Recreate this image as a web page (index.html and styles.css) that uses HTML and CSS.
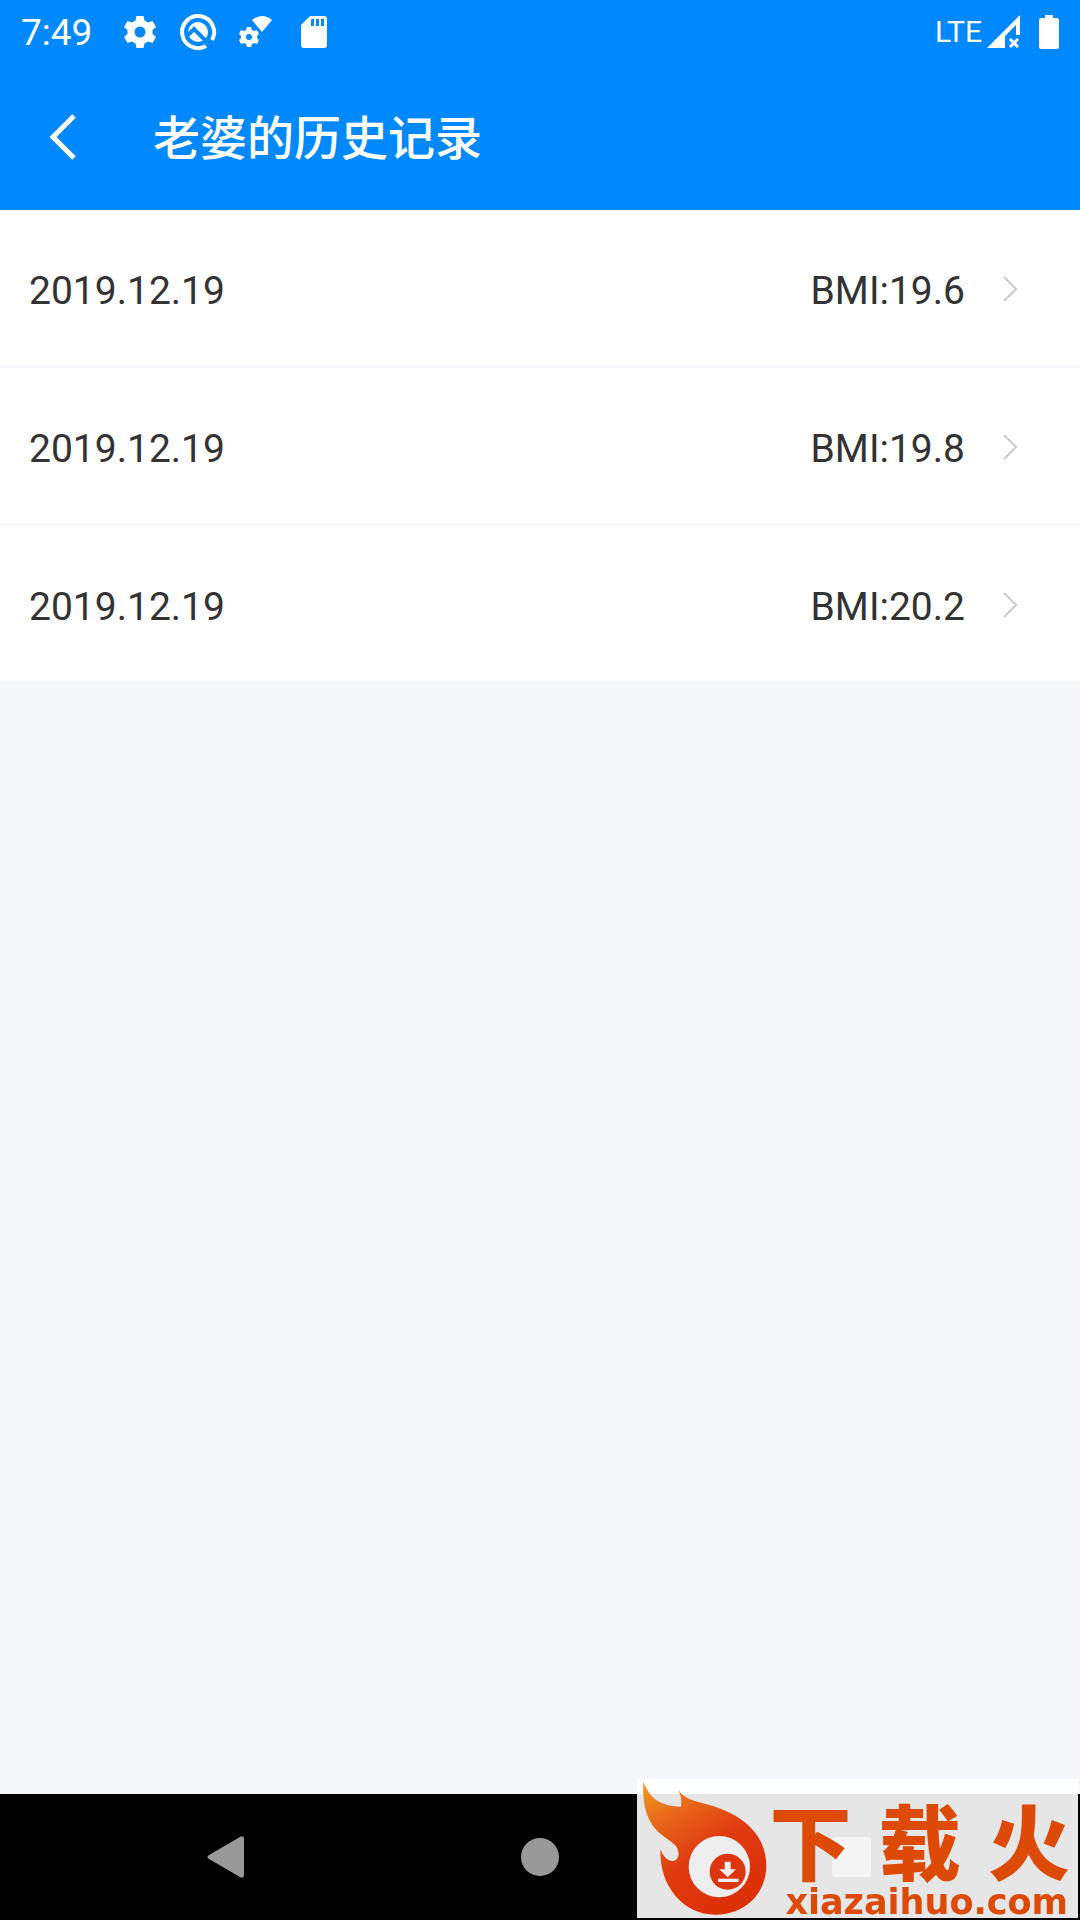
FILE: index.html
```
<!DOCTYPE html>
<html lang="zh-CN">
    <head>
        <meta charset="utf-8">
        <meta name="viewport" content="width=device-width, initial-scale=1">
        <link rel="stylesheet" href="styles.css">
        <title>老婆的历史记录</title>
    </head>
    <body>
        <header class="top">
            <div class="status">
                <span class="time">7:49</span>
                <svg class="status-icon" viewBox="0 0 36 36">
                    <path fill-rule="evenodd" d="M14.500 2h7l1 4.500 3.500 2 4.500-1.500 3.500 6-3.500 3v4l3.500 3-3.500 6-4.500-1.500-3.500 2-1 4.500h-7l-1-4.500-3.500-2-4.500 1.500-3.500-6 3.500-3v-4l-3.500-3 3.500-6 4.500 1.500 3.500-2zM18 12.500a5.500 5.500 0 1 0 0 11a5.500 5.500 0 1 0 0-11z"/>
                </svg>
                <svg class="status-icon" viewBox="0 0 36 36">
                    <path class="ring" d="M26 32A16 16 0 1 1 32 26"/>
                    <circle cx="18" cy="18" r="10"/>
                    <path class="slash" d="M7 22l7-7L31 32"/>
                </svg>
                <svg class="status-icon" viewBox="0 0 36 36">
                    <path fill-rule="evenodd" d="M9 13h4l1 3 2 1 3-1 2 4-2 2v2l2 2-2 4-3-1-2 1-1 3H9l-1-3-2-1-3 1-2-4 2-2v-2l-2-2 2-4 3 1 2-1zM11 20a3 3 0 1 0 0 6a3 3 0 1 0 0-6z"/>
                    <path d="M14 6q10-8 20 0L24 18z"/>
                </svg>
                <svg class="status-icon" viewBox="0 0 36 36">
                    <path fill-rule="evenodd" d="M14 2h14q3 0 3 3v26q0 3-3 3H8q-3 0-3-3V11zM15 5v7h3V5zM20 5v7h3V5zM25 5v7h3V5z"/>
                </svg>
                <span class="network">LTE</span>
                <svg class="signal" viewBox="0 0 34 34">
                    <path d="M0 33L33 0v20h-4V10L18 21v12z"/>
                    <path class="cross" d="M23 24l8 8M31 24l-8 8"/>
                </svg>
                <svg class="battery" viewBox="0 0 20 34">
                    <path d="M6 0h8v3h4q2 0 2 2v27q0 2-2 2H2q-2 0-2-2V5q0-2 2-2h4z"/>
                </svg>
            </div>
            <div class="title-bar">
                <button type="button" class="back" aria-label="返回">
                    <svg viewBox="0 0 28 48"><path d="M25 3L4 24l21 21"/></svg>
                </button>
                <h1>老婆的历史记录</h1>
            </div>
        </header>

        <main>
            <ul class="records">
                <li>
                    <a href="#" class="record">
                        <span class="date">2019.12.19</span>
                        <span>BMI:19.6</span>
                        <svg class="arrow" viewBox="0 0 15 26"><path d="M1 1l12 12L1 25"/></svg>
                    </a>
                </li>
                <li>
                    <a href="#" class="record">
                        <span class="date">2019.12.19</span>
                        <span>BMI:19.8</span>
                        <svg class="arrow" viewBox="0 0 15 26"><path d="M1 1l12 12L1 25"/></svg>
                    </a>
                </li>
                <li>
                    <a href="#" class="record">
                        <span class="date">2019.12.19</span>
                        <span>BMI:20.2</span>
                        <svg class="arrow" viewBox="0 0 15 26"><path d="M1 1l12 12L1 25"/></svg>
                    </a>
                </li>
            </ul>
        </main>

        <nav class="system-nav">
            <button type="button" aria-label="Back">
                <svg viewBox="0 0 42 42"><path d="M3 19L34 1q4-2 4 2v36q0 4-4 2L3 23q-3-2 0-4z"/></svg>
            </button>
            <button type="button" aria-label="Home">
                <svg viewBox="0 0 42 42"><circle cx="21" cy="21" r="19"/></svg>
            </button>
            <button type="button" aria-label="Recent apps">
                <svg viewBox="0 0 42 42"><rect x="0" y="1" width="39" height="40" rx="3"/></svg>
            </button>
        </nav>

        <div class="watermark">
            <svg class="flame" viewBox="21 27 396 417">
                <defs>
                    <linearGradient id="fire" x1="0" y1="0" x2="0.600" y2="1">
                        <stop offset="0" stop-color="#f39a20"/>
                        <stop offset="0.300" stop-color="#e8641a"/>
                        <stop offset="0.600" stop-color="#e03a10"/>
                        <stop offset="1" stop-color="#dc3005"/>
                    </linearGradient>
                </defs>
                <path fill="url(#fire)" d="M40 35C57 78 82 108 153 110Q157 84 145 60C162 85 184 91 225 101C340 130 409 195 409 287C409 370 345 434 256 434C160 434 88 350 91 237C99 258 112 274 130 273C149 270 151 241 135 225C110 202 78 190 60 153C42 120 38 78 40 35z"/>
                <circle class="eye" cx="268" cy="290" r="92"/>
                <circle class="pupil" cx="293" cy="305" r="54"/>
                <path class="eye" d="M284 275h18v23h16l-25 24-25-24h16zM264 326h62v10h-62z"/>
            </svg>
            <div class="brand">
                <div class="brand-name"><span>下</span><span>载</span><span>火</span></div>
                <div class="brand-site">xiazaihuo.com</div>
            </div>
        </div>
    </body>
</html>
```
FILE: styles.css
```
* {
    box-sizing: border-box;
}
body {
    margin: 0;
    min-height: 100vh;
    display: flex;
    flex-direction: column;
    background-color: #f5f7fb;
    color: #333;
    font-family: Roboto, "Noto Sans CJK SC", sans-serif;
}
button {
    padding: 0;
    border: 0;
    background: none;
}
svg {
    display: block;
    flex: none;
}
.top {
    background-color: #0088ff;
    color: #fff;
}
.status {
    display: flex;
    align-items: center;
    height: 64px;
    padding: 0 21px;
    fill: #fff;
}
.time {
    margin-right: 30px;
    font-size: 37px;
}
.status-icon {
    width: 36px;
    height: 36px;
    margin-right: 22px;
    overflow: visible;
}
.ring {
    fill: none;
    stroke: #fff;
    stroke-width: 4px;
}
.slash {
    fill: none;
    stroke: #0088ff;
    stroke-width: 4px;
}
.network {
    margin-left: auto;
    padding-bottom: 2px;
    font-size: 30px;
}
.signal {
    width: 34px;
    height: 34px;
    margin: 0 18px 0 5px;
}
.cross {
    stroke: #fff;
    stroke-width: 3px;
}
.battery {
    width: 20px;
    height: 34px;
}
.title-bar {
    display: flex;
    align-items: center;
    height: 146px;
    padding: 0 48px 0 49px;
}
.back {
    width: 104px;
}
.back svg {
    width: 28px;
    height: 48px;
    fill: none;
    stroke: #fff;
    stroke-width: 5px;
}
h1 {
    margin: 0;
    padding-bottom: 6px;
    font-size: 47px;
    font-weight: 500;
}

/* history list */
main {
    flex: 1;
}
.records {
    display: flex;
    flex-direction: column;
    gap: 3px;
    margin: 0;
    padding: 0;
    list-style: none;
}
.record {
    display: flex;
    align-items: center;
    height: 155px;
    padding: 0 62px 0 29px;
    background-color: #fff;
    color: #333;
    font-size: 39px;
    text-decoration: none;
}
.record span {
    padding-top: 6px;
}
.date {
    flex: 1;
}
.arrow {
    width: 15px;
    height: 26px;
    margin: 3px 0 0 38px;
    fill: none;
    stroke: #ccc;
    stroke-width: 2px;
}

/* android buttons */
.system-nav {
    display: grid;
    grid-template-columns: repeat(3, 1fr);
    height: 126px;
    padding: 0 70px;
    background-color: #000;
}
.system-nav svg {
    width: 42px;
    height: 42px;
    margin: auto;
    fill: #999;
}

/* site logo over the corner */
.watermark {
    position: fixed;
    right: 2px;
    bottom: 2px;
    display: flex;
    padding-right: 8px;
    background-color: rgba(255, 255, 255, 0.9);
    color: #dc4a05;
}
.flame {
    width: 132px;
    height: 139px;
}
.eye {
    fill: #eee;
}
.pupil {
    fill: #dc3510;
}
.brand {
    display: flex;
    flex-direction: column;
    justify-content: flex-end;
}
.brand-name {
    display: flex;
    justify-content: space-between;
    padding-bottom: 6px;
    font-family: "Noto Sans CJK SC", sans-serif;
    font-size: 82px;
    font-weight: 900;
    line-height: 82px;
}
.brand-site {
    padding: 0 2px 0 16px;
    font-family: "DejaVu Sans", sans-serif;
    font-size: 35px;
    font-weight: bold;
    line-height: 32px;
}
```
